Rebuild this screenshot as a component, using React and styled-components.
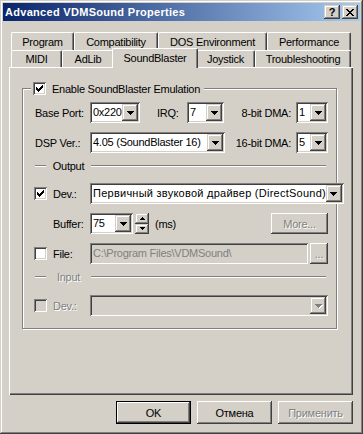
import React from 'react';
import styled, { createGlobalStyle, css } from 'styled-components';

const FACE = '#D4D0C8';
const LIGHT = '#FFFFFF';
const SHADOW = '#808080';
const DARK = '#404040';

const GlobalStyle = createGlobalStyle`
  html, body { margin: 0; padding: 0; background: ${FACE}; }
  body {
    font-family: "Liberation Sans", Arial, sans-serif;
    font-size: 11px;
    letter-spacing: -0.25px;
    color: #000;
  }
  *, *::before, *::after { box-sizing: border-box; }
`;

const raisedPush = css`
  box-shadow: inset -1px -1px ${DARK}, inset 1px 1px ${LIGHT}, inset -2px -2px ${SHADOW}, inset 2px 2px ${FACE};
`;
const raisedSmall = css`
  box-shadow: inset -1px -1px ${DARK}, inset 1px 1px ${FACE}, inset -2px -2px ${SHADOW}, inset 2px 2px ${LIGHT};
`;
const sunken = css`
  box-shadow: inset 1px 1px ${SHADOW}, inset -1px -1px ${LIGHT}, inset 2px 2px ${DARK}, inset -2px -2px ${FACE};
`;
const disabledText = css`
  color: ${SHADOW};
  text-shadow: 1px 1px 0 ${LIGHT};
`;

const Window = styled.div`
  width: 363px;
  height: 434px;
  padding: 3px;
  display: flex;
  flex-direction: column;
  background: ${FACE};
  box-shadow: inset -1px -1px ${DARK}, inset 1px 1px ${FACE}, inset -2px -2px ${SHADOW}, inset 2px 2px ${LIGHT};
`;

const TitleBar = styled.div`
  height: 18px;
  flex: none;
  display: flex;
  align-items: center;
  padding: 0 2px 0 2px;
  background: linear-gradient(to right, #0A246A, #A6CAF0);
`;

const TitleText = styled.span`
  flex: 1;
  color: #fff;
  font-weight: bold;
  font-size: 11px;
  letter-spacing: 0.3px;
  white-space: nowrap;
`;

const CaptionButton = styled.div`
  width: 16px;
  height: 14px;
  flex: none;
  margin-left: ${p => p.$gap || 0}px;
  display: flex;
  align-items: center;
  justify-content: center;
  background: ${FACE};
  font-weight: bold;
  font-size: 11px;
  letter-spacing: 0;
  line-height: 14px;
  ${raisedSmall}
`;

const Body = styled.div`
  flex: 1;
  display: flex;
  flex-direction: column;
  padding: 11px 0 0 6px;
`;

const TabStrip = styled.div`
  width: 344px;
  display: flex;
  flex-direction: column;
`;

const TabRow = styled.div`
  height: ${p => p.$h}px;
  display: flex;
  align-items: flex-end;
  padding-left: 2px;
`;

const Tab = styled.div`
  width: ${p => p.$w}px;
  height: ${p => p.$h}px;
  flex: none;
  display: flex;
  align-items: center;
  justify-content: center;
  white-space: nowrap;
  background: ${FACE};
  border-top: 1px solid ${LIGHT};
  border-left: 1px solid ${LIGHT};
  border-right: 1px solid ${DARK};
  border-top-left-radius: 2px;
  border-top-right-radius: 2px;
  box-shadow: inset -1px 0 ${SHADOW};
  ${p => p.$active && css`
    position: relative;
    z-index: 1;
    width: ${p.$w + 4}px;
    height: ${p.$h + 3}px;
    margin: 0 -2px -1px -2px;
    padding-bottom: 2px;
  `}
`;

const Panel = styled.div`
  width: 344px;
  height: 328px;
  padding: 14px 0 0 12px;
  border-top: 1px solid ${LIGHT};
  border-left: 1px solid ${LIGHT};
  box-shadow: inset -1px -1px ${DARK}, inset -2px -2px ${SHADOW};
`;

const Group = styled.fieldset`
  margin: 0;
  width: 315px;
  min-inline-size: 0;
  padding: 7px 8px 12px 12px;
  border: 1px solid ${SHADOW};
  box-shadow: 1px 1px 0 ${LIGHT}, inset 1px 1px 0 ${LIGHT};
`;

const Legend = styled.legend`
  margin-left: -4px;
  padding: 0 4px 0 3px;
  height: 13px;
  display: flex;
  align-items: center;
  gap: 6px;
  background: ${FACE};
  white-space: nowrap;
`;

const Row = styled.div`
  height: 21px;
  margin-top: ${p => p.$mt || 0}px;
  display: flex;
  align-items: center;
`;

const LabelCell = styled.div`
  width: 55px;
  flex: none;
  display: flex;
  align-items: center;
  gap: 6px;
  padding-left: ${p => p.$indent || 0}px;
  white-space: nowrap;
  ${p => p.$disabled && disabledText}
`;

const Label = styled.span`
  white-space: nowrap;
  margin-left: ${p => p.$ml || 0}px;
  margin-right: ${p => p.$mr || 0}px;
  ${p => p.$grow && css`flex: 1; text-align: right;`}
  ${p => p.$w && css`width: ${p.$w}px; flex: none;`}
  ${p => p.$disabled && disabledText}
`;

const CheckBox = styled.span`
  width: 13px;
  height: 13px;
  flex: none;
  margin-left: -1px;
  display: inline-flex;
  align-items: center;
  justify-content: center;
  background: ${p => (p.$disabled ? FACE : LIGHT)};
  ${sunken}
`;

const Combo = styled.div`
  width: ${p => (p.$w ? `${p.$w}px` : 'auto')};
  flex: ${p => (p.$w ? 'none' : 1)};
  height: 21px;
  padding: 2px;
  display: flex;
  background: ${p => (p.$disabled ? FACE : LIGHT)};
  ${sunken}
`;

const ComboText = styled.div`
  flex: 1;
  min-width: 0;
  padding-left: 1px;
  line-height: 17px;
  white-space: nowrap;
  overflow: hidden;
  letter-spacing: ${p => (p.$wide ? '0.25px' : 'inherit')};
  color: ${p => (p.$disabled ? SHADOW : '#000')};
`;

const DropButton = styled.div`
  width: 16px;
  height: 17px;
  flex: none;
  display: flex;
  align-items: center;
  justify-content: center;
  background: ${FACE};
  ${raisedSmall}
`;

const Spin = styled.div`
  width: 14px;
  height: 21px;
  flex: none;
  margin-left: 2px;
  display: flex;
  flex-direction: column;
`;

const SpinHalf = styled.div`
  flex: 1;
  display: flex;
  align-items: center;
  justify-content: center;
  background: ${FACE};
  ${raisedSmall}
`;

const PushButton = styled.div`
  width: ${p => p.$w}px;
  height: ${p => p.$h || 23}px;
  flex: none;
  margin-left: ${p => (p.$auto ? 'auto' : `${p.$ml || 0}px`)};
  display: flex;
  align-items: center;
  justify-content: center;
  background: ${FACE};
  white-space: nowrap;
  ${p => (p.$default
    ? css`box-shadow: inset 0 0 0 1px #000, inset -2px -2px ${DARK}, inset 2px 2px ${LIGHT}, inset -3px -3px ${SHADOW}, inset 3px 3px ${FACE};`
    : raisedPush)}
  ${p => p.$disabled && disabledText}
`;

const TextField = styled.div`
  flex: 1;
  height: 21px;
  padding: 2px 2px 2px 3px;
  line-height: 17px;
  white-space: nowrap;
  overflow: hidden;
  background: ${FACE};
  color: ${SHADOW};
  ${sunken}
`;

const Separator = styled.div`
  height: 14px;
  margin-top: ${p => p.$mt || 0}px;
  display: flex;
  align-items: center;
`;

const SepLine = styled.div`
  height: 2px;
  border-top: 1px solid ${SHADOW};
  border-bottom: 1px solid ${LIGHT};
  width: ${p => (p.$w ? `${p.$w}px` : 'auto')};
  flex: ${p => (p.$w ? 'none' : 1)};
  margin-right: ${p => p.$mr || 0}px;
`;

const SepLabel = styled.span`
  width: 45px;
  flex: none;
  text-align: center;
  ${p => p.$disabled && disabledText}
`;

const ButtonBar = styled.div`
  width: 344px;
  margin-top: 6px;
  display: flex;
  justify-content: flex-end;
  gap: 6px;
`;

const Svg = styled.svg`
  display: block;
  shape-rendering: crispEdges;
  overflow: visible;
`;

const CheckMark = () => (
  <Svg width="7" height="7" viewBox="0 0 7 7">
    <path
      fill="#000"
      d="M6 0h1v1h-1z M5 1h2v1h-2z M0 2h1v1h-1z M4 2h3v1h-3z M0 3h2v1h-2z M3 3h3v1h-3z M0 4h5v1h-5z M1 5h3v1h-3z M2 6h1v1h-1z"
    />
  </Svg>
);

const DownArrow = ({ disabled }) => (
  <Svg width="7" height="4" viewBox="0 0 7 4">
    {disabled && (
      <path fill={LIGHT} transform="translate(1 1)" d="M0 0h7v1H0z M1 1h5v1H1z M2 2h3v1H2z M3 3h1v1H3z" />
    )}
    <path fill={disabled ? SHADOW : '#000'} d="M0 0h7v1H0z M1 1h5v1H1z M2 2h3v1H2z M3 3h1v1H3z" />
  </Svg>
);

const SmallArrow = ({ up }) => (
  <Svg width="5" height="3" viewBox="0 0 5 3">
    <path
      fill="#000"
      d={up ? 'M2 0h1v1H2z M1 1h3v1H1z M0 2h5v1H0z' : 'M0 0h5v1H0z M1 1h3v1H1z M2 2h1v1H2z'}
    />
  </Svg>
);

const CloseGlyph = () => (
  <Svg width="8" height="7" viewBox="0 0 8 7">
    <path
      fill="#000"
      d="M0 0h2v1H0z M6 0h2v1H6z M1 1h2v1H1z M5 1h2v1H5z M2 2h4v1H2z M3 3h2v1H3z M2 4h4v1H2z M1 5h2v1H1z M5 5h2v1H5z M0 6h2v1H0z M6 6h2v1H6z"
    />
  </Svg>
);

const ComboBox = ({ w, value, disabled, wide }) => (
  <Combo $w={w} $disabled={disabled}>
    <ComboText $disabled={disabled} $wide={wide}>{value}</ComboText>
    <DropButton>
      <DownArrow disabled={disabled} />
    </DropButton>
  </Combo>
);

const Check = ({ checked, disabled }) => (
  <CheckBox $disabled={disabled}>{checked && <CheckMark />}</CheckBox>
);

const ROW1 = [
  ['Program', 63],
  ['Compatibility', 84],
  ['DOS Environment', 109],
  ['Performance', 84],
];
const ROW2 = [
  ['MIDI', 51],
  ['AdLib', 52],
  ['SoundBlaster', 82, true],
  ['Joystick', 59],
  ['Troubleshooting', 96],
];

export default function App() {
  return (
    <>
      <GlobalStyle />
      <Window>
        <TitleBar>
          <TitleText>Advanced VDMSound Properties</TitleText>
          <CaptionButton>?</CaptionButton>
          <CaptionButton $gap={2}>
            <CloseGlyph />
          </CaptionButton>
        </TitleBar>
        <Body>
          <TabStrip>
            <TabRow $h={18}>
              {ROW1.map(([t, w]) => (
                <Tab key={t} $w={w} $h={18}>{t}</Tab>
              ))}
            </TabRow>
            <TabRow $h={17}>
              {ROW2.map(([t, w, a]) => (
                <Tab key={t} $w={w} $h={17} $active={a}>{t}</Tab>
              ))}
            </TabRow>
          </TabStrip>
          <Panel>
            <Group>
              <Legend>
                <Check checked />
                <span>Enable SoundBlaster Emulation</span>
              </Legend>
              <Row>
                <LabelCell>Base Port:</LabelCell>
                <ComboBox w={50} value="0x220" />
                <Label $ml={17} $w={30}>IRQ:</Label>
                <ComboBox w={37} value="7" />
                <Label $grow $mr={5}>8-bit DMA:</Label>
                <ComboBox w={32} value="1" />
              </Row>
              <Row $mt={9}>
                <LabelCell>DSP Ver.:</LabelCell>
                <ComboBox w={135} value="4.05 (SoundBlaster 16)" />
                <Label $grow $mr={5}>16-bit DMA:</Label>
                <ComboBox w={32} value="5" />
              </Row>
              <Separator $mt={6}>
                <SepLine $w={11} />
                <SepLabel>Output</SepLabel>
                <SepLine $mr={2} />
              </Separator>
              <Row $mt={10}>
                <LabelCell>
                  <Check checked />
                  <span>Dev.:</span>
                </LabelCell>
                <ComboBox wide value="Первичный звуковой драйвер (DirectSound)" />
              </Row>
              <Row $mt={9}>
                <LabelCell $indent={18}>Buffer:</LabelCell>
                <ComboBox w={43} value="75" />
                <Spin>
                  <SpinHalf><SmallArrow up /></SpinHalf>
                  <SpinHalf><SmallArrow /></SpinHalf>
                </Spin>
                <Label $ml={6}>(ms)</Label>
                <PushButton $w={57} $h={21} $auto $disabled>More...</PushButton>
              </Row>
              <Row $mt={9}>
                <LabelCell>
                  <Check />
                  <span>File:</span>
                </LabelCell>
                <TextField>C:\Program Files\VDMSound\</TextField>
                <PushButton $w={18} $h={21} $ml={2} $disabled>...</PushButton>
              </Row>
              <Separator $mt={6}>
                <SepLine $w={11} />
                <SepLabel $disabled>Input</SepLabel>
                <SepLine $mr={2} />
              </Separator>
              <Row $mt={11}>
                <LabelCell $disabled>
                  <Check disabled />
                  <span>Dev.:</span>
                </LabelCell>
                <ComboBox value="" disabled />
              </Row>
            </Group>
          </Panel>
          <ButtonBar>
            <PushButton $w={75} $default>OK</PushButton>
            <PushButton $w={75}>Отмена</PushButton>
            <PushButton $w={75} $disabled>Применить</PushButton>
          </ButtonBar>
        </Body>
      </Window>
    </>
  );
}
